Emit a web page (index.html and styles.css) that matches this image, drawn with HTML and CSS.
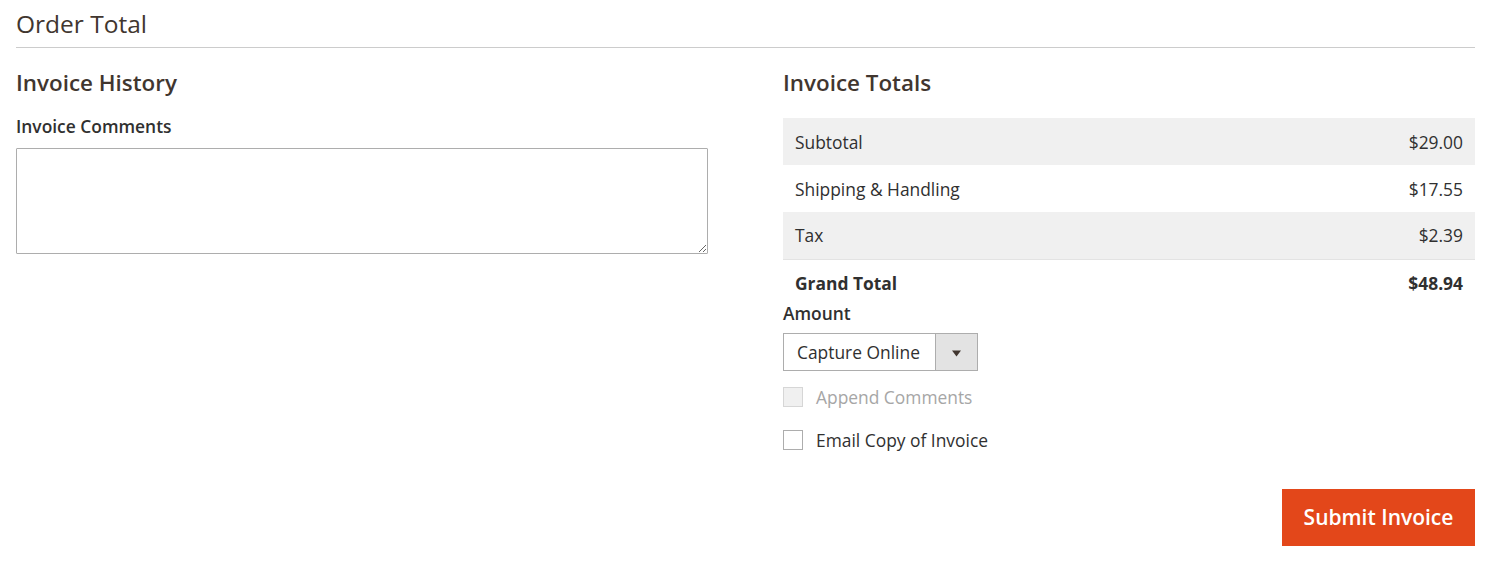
FILE: index.html
```html
<!DOCTYPE html>
<html lang="en">
<head>
<meta charset="utf-8">
<title>Order Total</title>
<link rel="stylesheet" href="styles.css">
</head>
<body>
<div class="page">
  <h2 class="section-title">Order Total</h2>
  <div class="columns">
    <div class="col">
      <h3 class="item-title">Invoice History</h3>
      <label class="field-label" for="comments">Invoice Comments</label>
      <textarea id="comments" class="comments"></textarea>
    </div>
    <div class="col">
      <h3 class="item-title">Invoice Totals</h3>
      <table class="totals">
        <tbody>
          <tr class="odd"><td>Subtotal</td><td class="num">$29.00</td></tr>
          <tr><td>Shipping &amp; Handling</td><td class="num">$17.55</td></tr>
          <tr class="odd last"><td>Tax</td><td class="num">$2.39</td></tr>
          <tr class="grand"><td>Grand Total</td><td class="num">$48.94</td></tr>
        </tbody>
      </table>
      <div class="field-label amount-label">Amount</div>
      <div class="select">
        <span class="select-value">Capture Online</span>
        <span class="select-btn"><svg width="11" height="7" viewBox="0 0 11 7"><path d="M1 0.5h9L5.5 6.5z" fill="#41362f"/></svg></span>
      </div>
      <div class="check disabled"><span class="box"></span><span>Append Comments</span></div>
      <div class="check"><span class="box"></span><span>Email Copy of Invoice</span></div>
      <div class="actions"><button class="primary" type="button">Submit Invoice</button></div>
    </div>
  </div>
</div>
</body>
</html>
```

FILE: styles.css
```css
* { box-sizing: border-box; }
html, body { margin: 0; padding: 0; background: #fff; }
body {
  font-family: "Open Sans", "Noto Sans", sans-serif;
  color: #303030;
  font-size: 17.4px;
}
.page { padding: 0 20px 0 16px; }
.section-title {
  margin: 0;
  font-size: 24.5px;
  font-weight: 400;
  line-height: 32px;
  color: #41362f;
  padding: 8px 0 7px;
  border-bottom: 1px solid #cccccc;
}
.columns {
  display: grid;
  grid-template-columns: 692px 692px;
  column-gap: 75px;
}
.col { display: flex; flex-direction: column; align-items: flex-start; }
.item-title {
  margin: 20px 0 0;
  font-size: 22.4px;
  font-weight: 600;
  line-height: 30px;
  color: #41362f;
}
.field-label {
  display: block;
  margin-top: 16px;
  font-size: 17.4px;
  font-weight: 600;
  line-height: 24px;
  color: #303030;
}
.comments {
  display: block;
  margin-top: 10px;
  width: 692px;
  height: 106px;
  border: 1px solid #adadad;
  border-radius: 1px;
  font-family: inherit;
  font-size: 17px;
  padding: 8px;
}
.totals {
  margin-top: 20px;
  width: 100%;
  border-collapse: collapse;
  font-size: 17.4px;
}
.totals td {
  height: 47px;
  padding: 0 12px;
  line-height: 24px;
  vertical-align: middle;
}
.totals .num { text-align: right; }
.totals tr.odd td { background: #f0f0f0; }
.totals tr.last td { border-bottom: 1px solid #e3e3e3; }
.totals tr.grand td {
  height: 40px;
  padding-top: 11px;
  padding-bottom: 5px;
  font-weight: 700;
  color: #303030;
}
.amount-label { margin-top: 1px; }
.select {
  margin-top: 8px;
  display: flex;
  width: 195px;
  height: 38px;
  border: 1px solid #adadad;
}
.select-value {
  flex: 1;
  padding-left: 13px;
  line-height: 36px;
  font-size: 17.4px;
  color: #303030;
}
.select-btn {
  width: 42px;
  border-left: 1px solid #adadad;
  background: #e3e3e3;
  display: flex;
  align-items: center;
  justify-content: center;
}
.select-btn svg { display: block; margin-top: 3px; }
.check {
  display: flex;
  align-items: center;
  gap: 13px;
  height: 24px;
  margin-top: 19px;
  line-height: 24px;
  color: #303030;
}
.select + .check { margin-top: 14px; }
.check .box {
  width: 20px;
  height: 20px;
  border: 1px solid #adadad;
  background: #fff;
}
.check.disabled { color: #a6a6a6; }
.check.disabled .box { border-color: #d6d6d6; background: #f0f0f0; }
.actions {
  align-self: stretch;
  display: flex;
  justify-content: flex-end;
  margin-top: 37px;
}
.primary {
  height: 57px;
  width: 193px;
  border: 0;
  background: #e3471a;
  color: #fff;
  font-family: inherit;
  font-size: 21px;
  font-weight: 600;
  padding: 0;
  cursor: pointer;
}
```
